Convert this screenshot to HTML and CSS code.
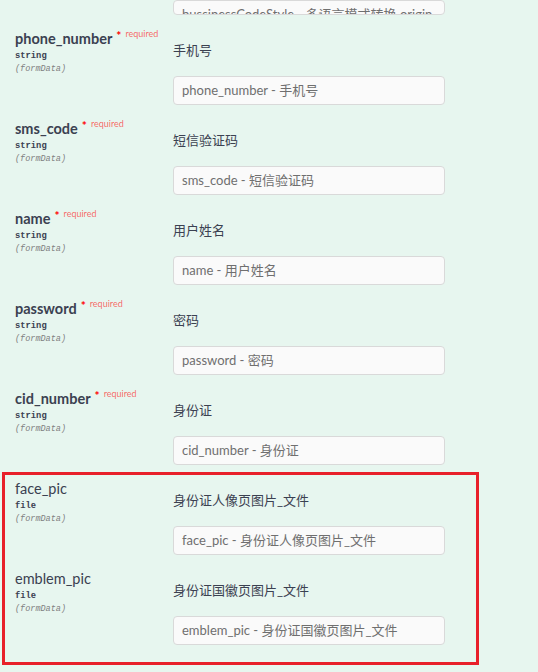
FILE: index.html
```html
<!DOCTYPE html>
<html lang="zh">
<head>
<meta charset="utf-8">
<link rel="stylesheet" href="styles.css">
</head>
<body>
<div class="params">
  <div class="partial">
    <div class="field">bussinessCodeStyle - 多语言模式转换 origin</div>
  </div>

  <div class="row">
    <div class="col-name">
      <div class="pname req">phone_number<span class="star">*</span><span class="required">required</span></div>
      <div class="ptype">string</div>
      <div class="pin">(formData)</div>
    </div>
    <div class="col-desc">
      <div class="desc">手机号</div>
      <div class="field">phone_number - 手机号</div>
    </div>
  </div>

  <div class="row">
    <div class="col-name">
      <div class="pname req">sms_code<span class="star">*</span><span class="required">required</span></div>
      <div class="ptype">string</div>
      <div class="pin">(formData)</div>
    </div>
    <div class="col-desc">
      <div class="desc">短信验证码</div>
      <div class="field">sms_code - 短信验证码</div>
    </div>
  </div>

  <div class="row">
    <div class="col-name">
      <div class="pname req">name<span class="star">*</span><span class="required">required</span></div>
      <div class="ptype">string</div>
      <div class="pin">(formData)</div>
    </div>
    <div class="col-desc">
      <div class="desc">用户姓名</div>
      <div class="field">name - 用户姓名</div>
    </div>
  </div>

  <div class="row">
    <div class="col-name">
      <div class="pname req">password<span class="star">*</span><span class="required">required</span></div>
      <div class="ptype">string</div>
      <div class="pin">(formData)</div>
    </div>
    <div class="col-desc">
      <div class="desc">密码</div>
      <div class="field">password - 密码</div>
    </div>
  </div>

  <div class="row">
    <div class="col-name">
      <div class="pname req">cid_number<span class="star">*</span><span class="required">required</span></div>
      <div class="ptype">string</div>
      <div class="pin">(formData)</div>
    </div>
    <div class="col-desc">
      <div class="desc">身份证</div>
      <div class="field">cid_number - 身份证</div>
    </div>
  </div>

  <div class="highlight">
    <div class="row">
      <div class="col-name">
        <div class="pname">face_pic</div>
        <div class="ptype">file</div>
        <div class="pin">(formData)</div>
      </div>
      <div class="col-desc">
        <div class="desc">身份证人像页图片_文件</div>
        <div class="field">face_pic - 身份证人像页图片_文件</div>
      </div>
    </div>

    <div class="row">
      <div class="col-name">
        <div class="pname">emblem_pic</div>
        <div class="ptype">file</div>
        <div class="pin">(formData)</div>
      </div>
      <div class="col-desc">
        <div class="desc">身份证国徽页图片_文件</div>
        <div class="field">emblem_pic - 身份证国徽页图片_文件</div>
      </div>
    </div>
  </div>
</div>
</body>
</html>
```

FILE: styles.css
```css
html, body {
  margin: 0;
  padding: 0;
  background: #e7f6ef;
}

body {
  font-family: "Lato", "Noto Sans CJK SC", sans-serif;
  color: #3b4151;
  width: 538px;
  height: 672px;
  overflow: hidden;
}

.params {
  padding-left: 15px;
}

.partial {
  height: 15px;
  overflow: hidden;
  display: flex;
  flex-direction: column;
  justify-content: flex-end;
  padding-left: 158px;
}

.row {
  display: grid;
  grid-template-columns: 158px 272px;
}

.col-name {
  margin-top: 14px;
}

.col-desc {
  margin-top: 25px;
}

.pname {
  font-size: 14.5px;
  line-height: 20px;
  height: 20px;
  white-space: nowrap;
}

.pname.req {
  font-weight: bold;
}

.star {
  color: #ff0000;
  font-size: 12px;
  font-weight: bold;
  position: relative;
  top: -4px;
  margin-left: 4px;
}

.required {
  color: rgba(255, 0, 0, 0.6);
  font-size: 9px;
  font-weight: normal;
  position: relative;
  top: -7px;
  margin-left: 4px;
}

.ptype {
  font-family: "Liberation Mono", monospace;
  font-weight: bold;
  font-size: 8.8px;
  line-height: 12px;
  margin-top: 1px;
  color: #3b4151;
}

.pin {
  font-family: "Liberation Mono", monospace;
  font-style: italic;
  font-size: 8.5px;
  line-height: 12px;
  margin-top: 1px;
  color: #808080;
}

.desc {
  font-size: 13px;
  line-height: 20px;
  height: 20px;
}

.field {
  margin-top: 16px;
  box-sizing: border-box;
  height: 29px;
  width: 272px;
  border: 1px solid #d9d9d9;
  border-radius: 4px;
  background: #fafafa;
  padding: 0 8px;
  font-size: 13px;
  line-height: 27px;
  color: #6f6f6f;
  white-space: nowrap;
  overflow: hidden;
}

.partial .field {
  margin-top: 0;
}

.highlight {
  margin-left: -13px;
  margin-top: 7px;
  width: 477px;
  box-sizing: border-box;
  border: 3px solid #e8202a;
  padding-left: 10px;
  padding-bottom: 17px;
}

.highlight .row:first-child .col-name {
  margin-top: 4px;
}

.highlight .row:first-child .col-desc {
  margin-top: 15px;
}
```
